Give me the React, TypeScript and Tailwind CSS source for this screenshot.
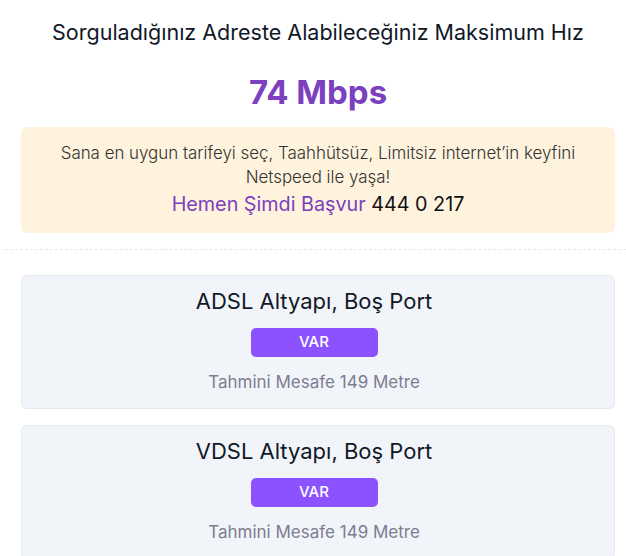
import React from 'react';

const cards = [
  { name: 'ADSL Altyapı, Boş Port', status: 'VAR', distance: 149 },
  { name: 'VDSL Altyapı, Boş Port', status: 'VAR', distance: 149 },
];

function PortCard({ card }: { card: (typeof cards)[number] }) {
  return (
    <div className="flex flex-col items-center rounded-md border border-[#e6eaf0] bg-[#f1f4f8] pt-[12px] pb-[15px] pr-[8px]">
      <h3 className="text-[22px] leading-[26px] text-[#111827]">{card.name}</h3>
      <span className="mt-[14px] flex h-[29px] w-[127px] items-center justify-center rounded-[5px] bg-[#8c52ff] text-[15px] font-medium text-white">
        {card.status}
      </span>
      <p className="mt-[14px] text-[17px] leading-[22px] text-[#7d7d92]">
        Tahmini Mesafe {card.distance} Metre
      </p>
    </div>
  );
}

export default function App() {
  return (
    <div className="h-screen overflow-hidden bg-white font-['Inter','Noto_Sans',sans-serif]">
      <div className="pl-[21px] pr-[11px] pt-[19px]">
        <h1 className="text-center text-[21.5px] leading-[26px] text-[#111827]">
          Sorguladığınız Adreste Alabileceğiniz Maksimum Hız
        </h1>
        <div className="mt-[27px] text-center text-[33px] font-bold leading-[40px] text-[#7b3fc0]">74 Mbps</div>
        <div className="mt-[15px] rounded-md bg-[#fff3de] px-4 pt-[14px] pb-[17px] text-center">
          <p className="text-[16.9px] font-light leading-[24px] text-[#333]">
            Sana en uygun tarifeyi seç, Taahhütsüz, Limitsiz internet’in keyfini
            <br />
            Netspeed ile yaşa!
          </p>
          <p className="mt-[3px] text-[19.75px] leading-[24px]">
            <span className="text-[#7b3fc0]">Hemen Şimdi Başvur</span>{' '}
            <span className="text-[#111]">444 0 217</span>
          </p>
        </div>
      </div>
      <div className="mt-[16px] ml-[5px] border-t border-dashed border-[#e5e7eb]" />
      <div className="flex flex-col gap-[16px] pl-[21px] pr-[11px] pt-[25px] pb-6">
        {cards.map(card => (
          <PortCard key={card.name} card={card} />
        ))}
      </div>
    </div>
  );
}
